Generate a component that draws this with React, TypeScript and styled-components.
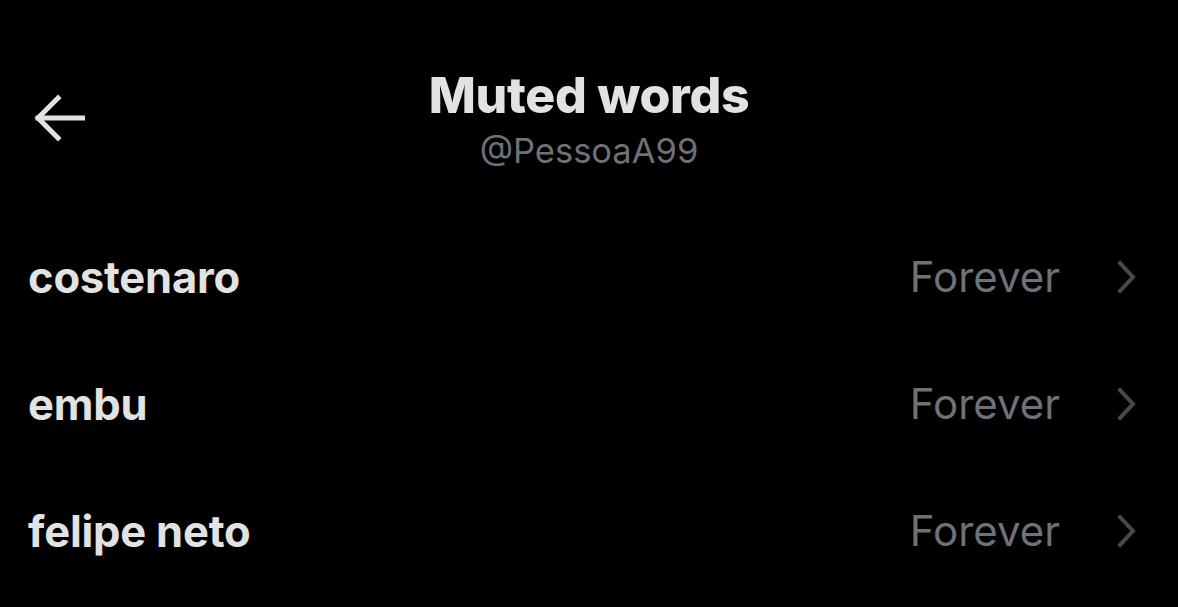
import styled, { createGlobalStyle } from 'styled-components'

const GlobalStyle = createGlobalStyle`
  html, body {
    margin: 0;
    padding: 0;
    background: #000;
  }
  body {
    font-family: Inter, "Noto Sans", "Liberation Sans", sans-serif;
    -webkit-font-smoothing: antialiased;
  }
`

const Page = styled.div`
  width: 1178px;
  height: 607px;
  background: #000;
  overflow: hidden;
  display: flex;
  flex-direction: column;
`

const Header = styled.header`
  position: relative;
  display: flex;
  flex-direction: column;
  align-items: center;
  padding-top: 69px;
  height: 171px;
  box-sizing: border-box;
`

const BackButton = styled.button`
  position: absolute;
  left: 28px;
  top: 88px;
  width: 62px;
  height: 60px;
  padding: 0;
  border: none;
  background: transparent;
  display: flex;
  align-items: center;
  justify-content: center;
  cursor: pointer;
`

const Title = styled.h1`
  margin: 0;
  font-size: 50px;
  font-weight: 800;
  line-height: 52px;
  color: #e2e2e2;
  letter-spacing: -0.3px;
`

const Handle = styled.div`
  font-size: 34.5px;
  line-height: 40px;
  color: #6e7176;
  margin-top: 10px;
`

const List = styled.ul`
  list-style: none;
  margin: 0;
  padding: 0;
  margin-top: 42px;
`

const Row = styled.li`
  height: 127px;
  display: flex;
  align-items: center;
  padding: 0 40px 0 28px;
  cursor: pointer;
`

const Word = styled.span`
  flex: 1;
  font-size: 43.5px;
  font-weight: 700;
  color: #e2e2e2;
  letter-spacing: -0.2px;
`

const Duration = styled.span`
  font-size: 42px;
  font-weight: 400;
  color: #6e7176;
  margin-right: 56px;
`

const Chevron = () => (
  <svg width="22" height="34" viewBox="0 0 22 34" fill="none">
    <path d="M4 3 L17 17 L4 31" stroke="#46484b" strokeWidth="4" strokeLinecap="square" />
  </svg>
)

const ArrowLeft = () => (
  <svg width="52" height="48" viewBox="0 0 52 48" fill="none">
    <path d="M50 24 H5 M25 4 L5 24 L25 44" stroke="#e2e2e2" strokeWidth="5" strokeLinecap="square" />
  </svg>
)

const words = ['costenaro', 'embu', 'felipe neto']

export default function App() {
  return (
    <>
      <GlobalStyle />
      <Page>
        <Header>
          <BackButton aria-label="Back">
            <ArrowLeft />
          </BackButton>
          <Title>Muted words</Title>
          <Handle>@PessoaA99</Handle>
        </Header>
        <List>
          {words.map((w) => (
            <Row key={w}>
              <Word>{w}</Word>
              <Duration>Forever</Duration>
              <Chevron />
            </Row>
          ))}
        </List>
      </Page>
    </>
  )
}
